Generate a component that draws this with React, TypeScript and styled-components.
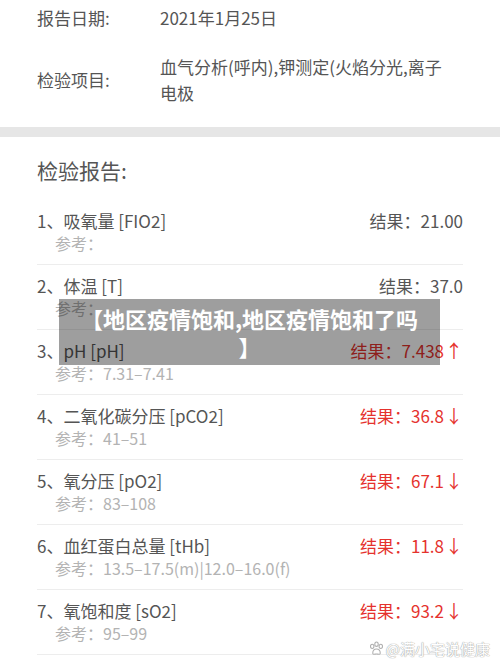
import React from 'react';
import styled, { createGlobalStyle } from 'styled-components';

const GlobalStyle = createGlobalStyle`
    html, body {
        margin: 0;
        padding: 0;
        background: #ffffff;
        overflow: hidden;
    }
    body {
        font-family: "Noto Sans CJK SC", "Noto Sans", sans-serif;
        color: #555555;
    }
`;

type Item = {
    title: string;
    result: string;
    reference: string;
    flag?: 'up' | 'down';
};

const items: Item[] = [
    { title: '1、吸氧量 [FIO2]', result: '21.00', reference: '' },
    { title: '2、体温 [T]', result: '37.0', reference: '' },
    { title: '3、pH [pH]', result: '7.438', reference: '7.31–7.41', flag: 'up' },
    { title: '4、二氧化碳分压 [pCO2]', result: '36.8', reference: '41–51', flag: 'down' },
    { title: '5、氧分压 [pO2]', result: '67.1', reference: '83–108', flag: 'down' },
    { title: '6、血红蛋白总量 [tHb]', result: '11.8', reference: '13.5–17.5(m)|12.0–16.0(f)', flag: 'down' },
    { title: '7、氧饱和度 [sO2]', result: '93.2', reference: '95–99', flag: 'down' },
];

const App: React.FC = () => {
    return (
        <Page>
            <GlobalStyle />
            <InfoSection>
                <InfoRow>
                    <InfoLabel>报告日期:</InfoLabel>
                    <InfoValue>2021年1月25日</InfoValue>
                </InfoRow>
                <InfoRow>
                    <InfoLabel>检验项目:</InfoLabel>
                    <InfoValue>血气分析(呼内),钾测定(火焰分光,离子电极</InfoValue>
                </InfoRow>
            </InfoSection>
            <Band />
            <ReportSection>
                <SectionTitle>检验报告:</SectionTitle>
                {items.map((item) => (
                    <ResultItem key={item.title}>
                        <ItemHead>
                            <ItemTitle>{item.title}</ItemTitle>
                            <ItemResult $abnormal={!!item.flag}>
                                结果：{item.result}
                                {item.flag && <Arrow>{item.flag === 'up' ? '↑' : '↓'}</Arrow>}
                            </ItemResult>
                        </ItemHead>
                        <ItemRef>参考：{item.reference}</ItemRef>
                    </ResultItem>
                ))}
            </ReportSection>

            <Banner>
                【地区疫情饱和,地区疫情饱和了吗
                <br />】
            </Banner>

            <Watermark>
                <svg width="15" height="15" viewBox="0 0 14 14">
                    <g fill="#ffffff" stroke="#b0b0b0" strokeWidth="1">
                        <ellipse cx="3" cy="5" rx="1.6" ry="2" />
                        <ellipse cx="7" cy="3" rx="1.6" ry="2" />
                        <ellipse cx="11" cy="5" rx="1.6" ry="2" />
                        <path d="M3.5 11.5 C3.5 8.5 5.5 7.5 7 7.5 C8.5 7.5 10.5 8.5 10.5 11.5 C10.5 12.8 8.5 12.2 7 12.2 C5.5 12.2 3.5 12.8 3.5 11.5 Z" />
                    </g>
                </svg>
                <span>@满小宅说健康</span>
            </Watermark>
        </Page>
    );
};

const Page = styled.div`
    position: relative;
    width: 500px;
    height: 666px;
    overflow: hidden;
    background: #ffffff;
`;

const InfoSection = styled.div`
    display: flex;
    flex-direction: column;
    gap: 23px;
    padding: 5px 37px 21px 37px;
`;

const InfoRow = styled.div`
    display: grid;
    grid-template-columns: 123px 1fr;
    align-items: center;
`;

const InfoLabel = styled.div`
    font-size: 17px;
    line-height: 26px;
    color: #555555;
`;

const InfoValue = styled.div`
    font-size: 17px;
    line-height: 26px;
    color: #555555;
    max-width: 298px;
`;

const Band = styled.div`
    height: 10px;
    background: #e6e6e6;
`;

const ReportSection = styled.div`
    display: flex;
    flex-direction: column;
    padding: 18px 37px 0 37px;
`;

const SectionTitle = styled.div`
    font-size: 21px;
    line-height: 30px;
    color: #555555;
    margin-bottom: 15px;
`;

const ResultItem = styled.div`
    display: flex;
    flex-direction: column;
    padding: 9px 0;
    border-bottom: 1px solid #ededed;
`;

const ItemHead = styled.div`
    display: flex;
    justify-content: space-between;
    align-items: center;
`;

const ItemTitle = styled.div`
    font-size: 17px;
    line-height: 23px;
    color: #555555;
`;

const ItemResult = styled.div<{ $abnormal: boolean }>`
    font-size: 17px;
    line-height: 23px;
    color: ${(p) => (p.$abnormal ? '#e5322d' : '#555555')};
    display: flex;
    align-items: center;
`;

const Arrow = styled.span`
    font-size: 18px;
    line-height: 23px;
    margin-left: 1px;
`;

const ItemRef = styled.div`
    font-size: 16px;
    line-height: 23px;
    color: #b3b3b3;
    padding-left: 18px;
    min-height: 23px;
`;

const Banner = styled.div`
    position: absolute;
    left: 59px;
    top: 299px;
    width: 381px;
    height: 66px;
    box-sizing: border-box;
    padding: 5px 8px 0;
    background: rgba(0, 0, 0, 0.38);
    color: #ffffff;
    font-size: 22px;
    font-weight: 700;
    line-height: 28px;
    text-align: center;
    white-space: nowrap;
`;

const Watermark = styled.div`
    position: absolute;
    right: 10px;
    top: 638px;
    display: flex;
    align-items: center;
    gap: 2px;
    font-size: 15px;
    color: #ffffff;
    text-shadow: 0 0 1px #a0a0a0, 0 0 1px #a0a0a0;
`;

export default App;
